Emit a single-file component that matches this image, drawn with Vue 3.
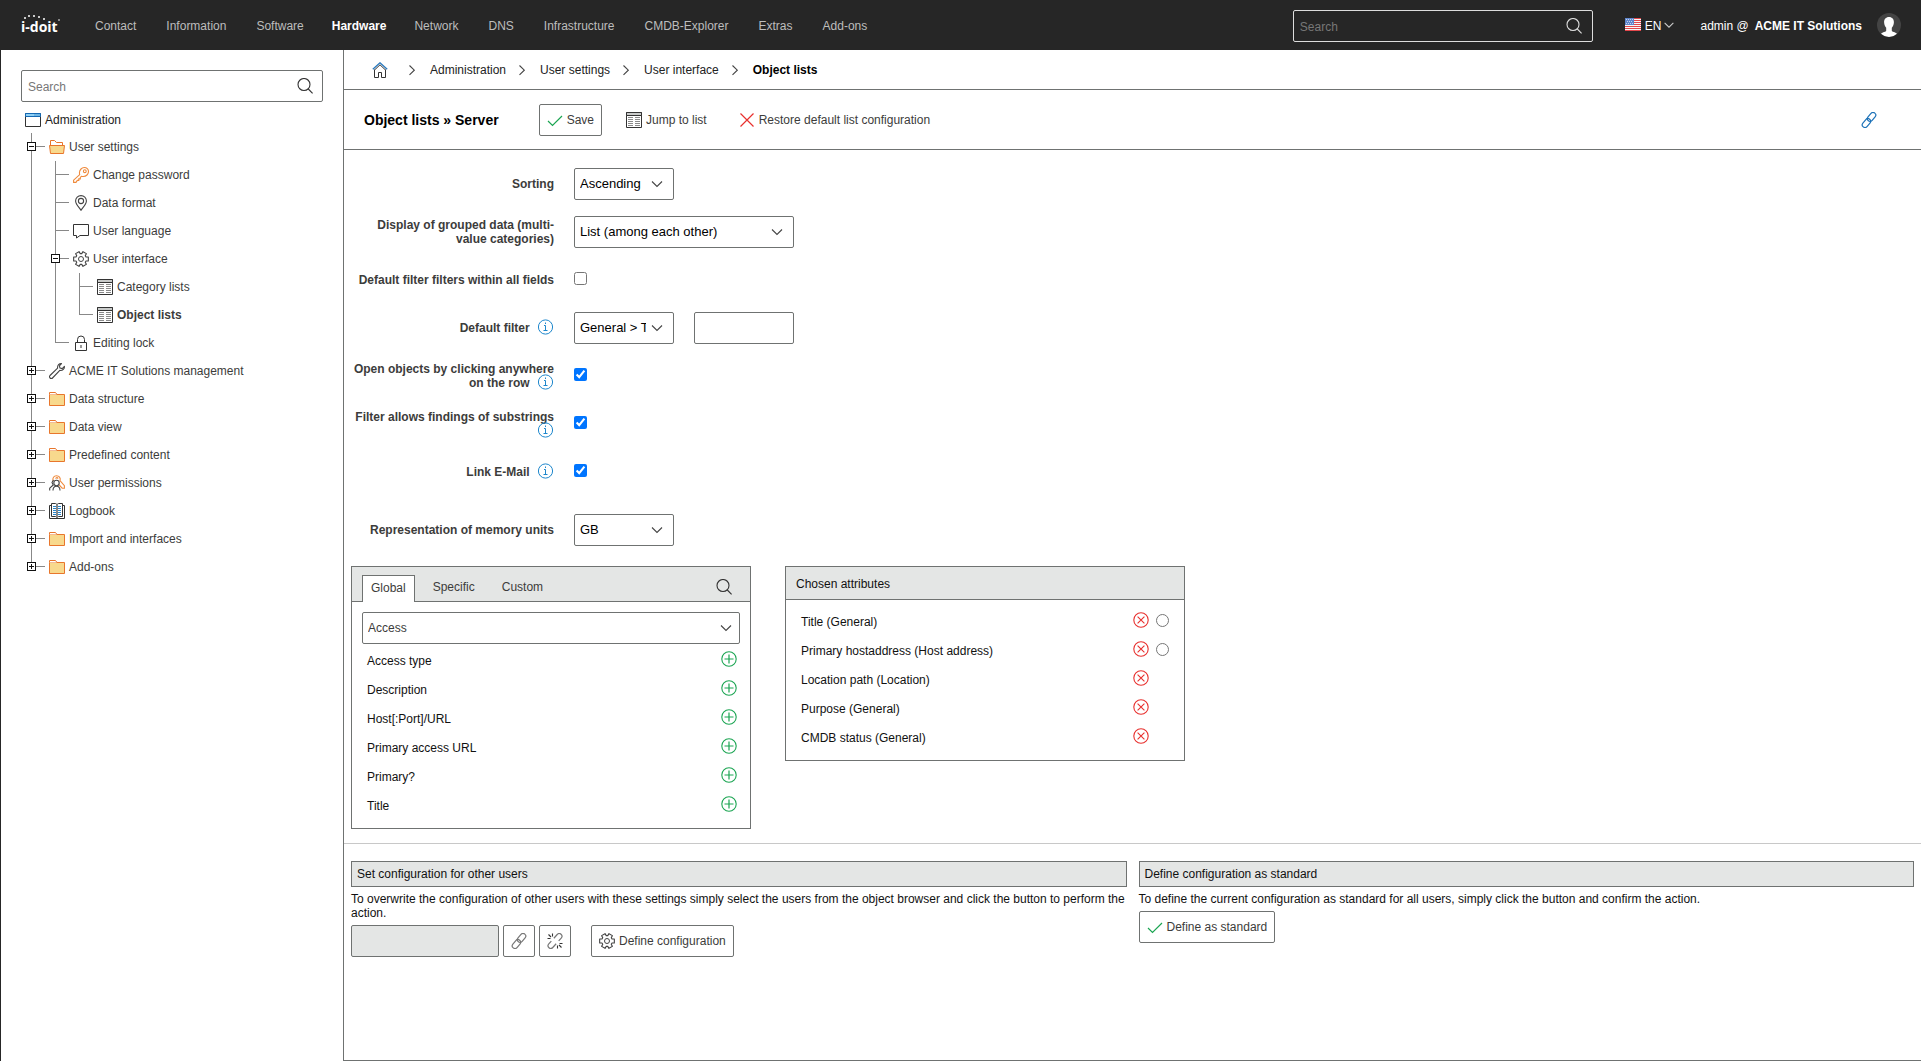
<script setup>
import { h, ref } from 'vue'

const S = 'fill="none" stroke="currentColor"'
const listIcon = `<path fill="#fff" stroke="#333" d="M.5.5h15v15H.5z"/><path fill="#c9cbca" stroke="#333" d="M.5.5h15v3H.5z"/><path stroke="#8a8a8a" fill="none" d="M2 5.5h5M2 7.5h5M2 9.5h5M2 11.5h5M2 13.5h5M9 5.5h5M9 7.5h5M9 9.5h5M9 11.5h5M9 13.5h5"/>`

// Six-toothed gear outline around the centre of the 16px grid
const gearPoints = [0, 60, 120, 180, 240, 300]
  .flatMap((a) => [[a - 22, 5.4], [a - 15, 7.6], [a + 15, 7.6], [a + 22, 5.4]])
  .map(([deg, r]) => {
    const rad = (deg * Math.PI) / 180
    return `${(8 + r * Math.cos(rad)).toFixed(2)},${(8 + r * Math.sin(rad)).toFixed(2)}`
  })
  .join(' ')

const icons = {
  search: `<g ${S} stroke-width="1.100"><circle cx="7" cy="6.500" r="6"/><path d="m11.300 11 4.300 4.300"/></g>`,
  window: `<path fill="#fff" stroke="#333" d="M.5 1.500h15v13H.5z"/><path fill="#8fd0f5" stroke="#1468b3" d="M.5 1.500h15v3H.5z"/><path stroke="#1468b3" d="M9.500 3h1M11.500 3h1M13.500 3h1"/>`,
  folderOpen: `<path fill="#fff" stroke="#e8762c" d="M1.500 6.500v-5h4l2 2h6v3"/><path fill="#f8d98d" stroke="#e8762c" d="M.5 6.500h15l-1 8h-13z"/>`,
  folder: `<path fill="#f8d98d" stroke="#e8762c" d="M.5 3.500h15v11H.5z"/><path fill="#fff" stroke="#e8762c" d="M.5 3.500v-2h6l1.500 2"/>`,
  key: `<g fill="none" stroke="#ef8a3c" stroke-width="1.100"><path d="M6.700 7.600C6.200 5.700 6.500 3.500 8 2 9.800.300 12.600.1 14.300 1.700c1.700 1.700 1.500 4.500-.3 6.300-1.500 1.500-3.700 1.800-5.600 1.300L7.300 10.400v1.500H5.800v1.500H4.300L3 15.400H.6V13.200z"/><circle cx="11.800" cy="4.200" r="1.400"/></g>`,
  pin: `<g fill="none" stroke="#444" stroke-width="1.100"><path d="M8 15.300C6.500 12.500 2.600 9.500 2.600 6a5.400 5.400 0 0 1 10.800 0c0 3.500-3.900 6.500-5.400 9.300z"/><circle cx="8" cy="6" r="2.600"/></g>`,
  bubble: `<path fill="none" stroke="#333" d="M.5 1.500h15v11H7L3.500 15v-2.500h-3z"/>`,
  gear: `<g fill="none" stroke="#444" stroke-linejoin="round"><polygon stroke-width="1.100" points="${gearPoints}"/><circle cx="8" cy="8" r="2.500"/></g>`,
  list: listIcon,
  lock: `<path fill="none" stroke="#333" d="M4.500 7V4.500a3.500 3.500 0 0 1 7 0V7M2.500 7.500h11v8h-11z"/><path stroke="#999" stroke-width="2" d="M8 10v3"/>`,
  wrench: `<path fill="none" stroke="#444" stroke-width="1.100" stroke-linejoin="round" d="M12.500.6C10.200.4 8.200 2.200 8.600 5.200L1 12.500c-.7.8-.6 1.800.1 2.500s1.700.7 2.400 0l7.300-7.600c3 .4 4.900-1.700 4.600-4L13.200 5.600 11 5 10.400 2.800z"/>`,
  users: `<g fill="none"><path stroke="#ef8a3c" stroke-width="1.100" d="M4.200 6.200C3 3 5 .7 7.500.7s4.500 2 3.500 5l4.400 5v2.500h-2.200l-3-3.200M6.500 3.500l1.500-1 1.200 1"/><g stroke="#444" stroke-width="1.100"><circle cx="7.500" cy="8" r="2.700"/><path d="M.7 15.500v-2.300L4.200 10 3 7.500 4.500 5M4 15.500c0-2.600 1.200-4.300 3.500-4.300s3.500 1.700 3.500 4.300"/></g></g>`,
  book: `<path fill="none" stroke="#333" d="M2.500 2.500h-2v13h15v-13h-2M2.500.5h4l1.500 1 1.500-1h4v13h-4l-1.500 1-1.500-1h-4z"/><path stroke="#888" stroke-width="2" d="M8 1.500v13"/><path stroke="#2a86c9" d="M4 3.500h3M4 5.500h3M4 7.500h3M4 9.500h3M4 11.500h3M9 3.500h3M9 5.500h3M9 7.500h3M9 9.500h3M9 11.500h3"/>`,
  home: `<path fill="none" stroke="#333" d="M2.500 7.500v8h4v-5h3v5h4v-8M2.500 8 8 2.800 13.500 8"/><path fill="none" stroke="#2a79bd" stroke-width="1.300" d="m.8 7.300 7.200-6.500 7.200 6.500"/>`,
  right: `<path ${S} stroke-width="1.100" d="m5.500 3.500 4.800 4.700-4.800 4.700"/>`,
  down: `<path ${S} stroke-width="1.200" d="m3 5.500 5 5 5-5"/>`,
  check: `<path fill="none" stroke="#1ba552" stroke-width="1.200" d="m1 9 4.500 4.500L15 4"/>`,
  cross: `<path fill="none" stroke="#e8302e" stroke-width="1.200" d="M1.500 1.500l13 13M14.500 1.500l-13 13"/>`,
  link: `<g ${S} stroke-width="1.200" transform="rotate(-50 8 8)"><rect x="-1" y="5.300" width="10" height="5.400" rx="2.700"/><rect x="7" y="5.300" width="10" height="5.400" rx="2.700"/></g>`,
  unlink: `<path ${S} stroke-width="1.200" transform="rotate(-48 8 8)" d="M5.500 5.300H1.700a2.700 2.700 0 0 0 0 5.400h5M10.500 10.700h3.800a2.700 2.700 0 0 0 0-5.400h-5"/><path stroke="#333" stroke-width="1.100" d="M1.500 1.500 4 4M5.500.5v3M.5 5.500h3M14.500 14.500 12 12M10.500 15.500v-3M15.500 10.500h-3"/>`,
  info: `<g fill="none" stroke="#1e87cc"><circle cx="7.500" cy="8" r="7.100"/><path d="M6 6.500h1.500v5M5.500 11.500h4M7.500 3.500v1.500"/></g>`,
  add: `<g fill="none" stroke="#1ba552"><circle cx="8" cy="8" r="7.200" stroke-width="1.100"/><path d="M8 3.500v9M3.500 8h9" stroke-width="1.200"/></g>`,
  remove: `<g fill="none" stroke="#e8302e"><circle cx="8" cy="8" r="7.200" stroke-width="1.100"/><path stroke-width="1.100" d="m4.600 4.600 6.800 6.800M11.400 4.600l-6.800 6.800"/></g>`,
  flag: `<path fill="#f7f7f7" d="M0 1h16v13H0z"/><path stroke="#e2474b" d="M0 1.500h16M0 3.500h16M0 5.500h16M0 7.500h16M0 9.500h16M0 11.500h16M0 13.500h16"/><path fill="#5f86cc" d="M0 1h9v7H0z"/><path stroke="#c3d2ee" stroke-dasharray="1 1" d="M1 2.500h7M2 4.500h6M1 6.500h7"/>`
}

const Icon = (props) => h('svg', { viewBox: '0 0 16 16', width: 16, height: 16, 'aria-hidden': 'true', innerHTML: icons[props.name] })
Icon.props = ['name']

const nav = ['Contact', 'Information', 'Software', 'Hardware', 'Network', 'DNS', 'Infrastructure', 'CMDB-Explorer', 'Extras', 'Add-ons']
const crumbs = ['Administration', 'User settings', 'User interface', 'Object lists']

const tree = [
  {
    name: 'User settings', icon: 'folderOpen', open: true, children: [
      { name: 'Change password', icon: 'key' },
      { name: 'Data format', icon: 'pin' },
      { name: 'User language', icon: 'bubble' },
      {
        name: 'User interface', icon: 'gear', open: true, children: [
          { name: 'Category lists', icon: 'list' },
          { name: 'Object lists', icon: 'list', active: true }
        ]
      },
      { name: 'Editing lock', icon: 'lock' }
    ]
  },
  { name: 'ACME IT Solutions management', icon: 'wrench' },
  { name: 'Data structure', icon: 'folder' },
  { name: 'Data view', icon: 'folder' },
  { name: 'Predefined content', icon: 'folder' },
  { name: 'User permissions', icon: 'users' },
  { name: 'Logbook', icon: 'book' },
  { name: 'Import and interfaces', icon: 'folder' },
  { name: 'Add-ons', icon: 'folder' }
]

const tabs = ['Global', 'Specific', 'Custom']
const activeTab = ref('Global')
const attributes = ['Access type', 'Description', 'Host[:Port]/URL', 'Primary access URL', 'Primary?', 'Title']
const chosen = [
  { name: 'Title (General)', sortable: true },
  { name: 'Primary hostaddress (Host address)', sortable: true },
  { name: 'Location path (Location)' },
  { name: 'Purpose (General)' },
  { name: 'CMDB status (General)' }
]
</script>

<template>
  <div class="app">
    <header class="top">
      <a class="logo" href="#" aria-label="i-doit">
        <svg width="42" height="22" viewBox="0 0 42 22">
          <text x="0" y="18" font-family="Open Sans, sans-serif" font-weight="700" font-size="14" fill="#fff">i-doit</text>
          <g fill="#fff">
            <circle cx="4" cy="4" r="1" /><circle cx="8" cy="2" r="1" /><circle cx="13" cy="2" r="1" />
            <circle cx="18" cy="3" r="1" /><circle cx="23" cy="5" r="1" /><circle cx="38" cy="6" r="1" opacity=".6" />
          </g>
        </svg>
      </a>
      <nav class="nav">
        <a v-for="item in nav" :key="item" href="#" :class="{ active: item === 'Hardware' }">{{ item }}</a>
      </nav>
      <div class="search dark">
        <input type="text" placeholder="Search" aria-label="Search">
        <Icon name="search" />
      </div>
      <button class="lang" type="button"><Icon name="flag" /><span>EN</span><Icon class="caret" name="down" /></button>
      <a class="account" href="#"><span>admin @</span><b>ACME IT Solutions</b>
        <svg width="24" height="24" viewBox="0 0 24 24" aria-hidden="true">
          <circle cx="12" cy="12" r="12" fill="#444" />
          <path fill="#fff" d="M12 4c3.200 0 5 2.300 4.900 5.200-.1 2.700-1 4.200-2.100 5.500v3.100c0 1 3.600 1.200 5.200 3A12 12 0 0 1 12 24a12 12 0 0 1-8-3.200c1.600-1.800 5.200-2 5.200-3v-3.100C8.100 13.400 7.200 11.900 7.100 9.200 7 6.300 8.800 4 12 4z" />
        </svg>
      </a>
    </header>

    <div class="body">
      <aside class="side">
        <div class="search">
          <input type="text" placeholder="Search" aria-label="Search tree">
          <Icon name="search" />
        </div>
        <a class="root" href="#"><Icon name="window" />Administration</a>
        <ul class="tree">
          <li v-for="a in tree" :key="a.name">
            <div class="row">
              <button class="toggle" :class="{ open: a.open }" type="button" :aria-label="'Toggle ' + a.name"></button>
              <a href="#"><Icon :name="a.icon" />{{ a.name }}</a>
            </div>
            <ul v-if="a.children">
              <li v-for="b in a.children" :key="b.name">
                <div class="row">
                  <button v-if="b.children" class="toggle open" type="button" :aria-label="'Toggle ' + b.name"></button>
                  <a href="#"><Icon :name="b.icon" />{{ b.name }}</a>
                </div>
                <ul v-if="b.children">
                  <li v-for="c in b.children" :key="c.name">
                    <div class="row"><a href="#" :class="{ active: c.active }"><Icon :name="c.icon" />{{ c.name }}</a></div>
                  </li>
                </ul>
              </li>
            </ul>
          </li>
        </ul>
      </aside>

      <main class="main">
        <nav class="crumbs" aria-label="Breadcrumb">
          <a class="home" href="#" aria-label="Home"><Icon name="home" /></a>
          <template v-for="c in crumbs" :key="c">
            <Icon class="sep" name="right" />
            <a href="#">{{ c }}</a>
          </template>
        </nav>

        <div class="toolbar">
          <h1>Object lists » Server</h1>
          <div class="actions">
            <button class="btn" type="button"><Icon name="check" />Save</button>
            <button class="btn plain" type="button"><Icon name="list" />Jump to list</button>
            <button class="btn plain" type="button"><Icon name="cross" />Restore default list configuration</button>
          </div>
          <button class="btn plain permalink" type="button" aria-label="Link"><Icon name="link" /></button>
        </div>

        <form class="form" @submit.prevent>
          <div class="field">
            <label for="sorting">Sorting</label>
            <select id="sorting" class="short"><option>Ascending</option></select>
          </div>
          <div class="field">
            <label for="grouped">Display of grouped data (multi-value categories)</label>
            <select id="grouped" class="long"><option>List (among each other)</option></select>
          </div>
          <div class="field">
            <label for="all-fields">Default filter filters within all fields</label>
            <input id="all-fields" type="checkbox">
          </div>
          <div class="field">
            <label for="filter">Default filter <Icon class="info" name="info" /></label>
            <select id="filter" class="short"><option>General &gt; Title</option></select>
            <input class="text" type="text" aria-label="Default filter value">
          </div>
          <div class="field">
            <label for="row-click">Open objects by clicking anywhere on the row <Icon class="info" name="info" /></label>
            <input id="row-click" type="checkbox" checked>
          </div>
          <div class="field">
            <label for="substrings">Filter allows findings of substrings <Icon class="info" name="info" /></label>
            <input id="substrings" type="checkbox" checked>
          </div>
          <div class="field">
            <label for="mail">Link E-Mail <Icon class="info" name="info" /></label>
            <input id="mail" type="checkbox" checked>
          </div>
          <div class="field memory">
            <label for="memory">Representation of memory units</label>
            <select id="memory" class="short"><option>GB</option></select>
          </div>
        </form>

        <div class="panels">
          <section class="panel">
            <div class="tabs">
              <button v-for="t in tabs" :key="t" type="button" :class="{ current: t === activeTab }" @click="activeTab = t">{{ t }}</button>
              <button class="find" type="button" aria-label="Search attributes"><Icon name="search" /></button>
            </div>
            <div class="available">
              <select class="category" aria-label="Category"><option>Access</option></select>
              <ul>
                <li v-for="a in attributes" :key="a">
                  <span>{{ a }}</span>
                  <button type="button" :aria-label="'Add ' + a"><Icon name="add" /></button>
                </li>
              </ul>
            </div>
          </section>
          <section class="panel">
            <h2>Chosen attributes</h2>
            <ul class="chosen">
              <li v-for="c in chosen" :key="c.name">
                <span>{{ c.name }}</span>
                <button type="button" :aria-label="'Remove ' + c.name"><Icon name="remove" /></button>
                <div class="slot"><input v-if="c.sortable" type="radio" name="default-sort" :aria-label="'Sort by ' + c.name"></div>
              </li>
            </ul>
          </section>
        </div>

        <hr>

        <div class="config">
          <section>
            <h2>Set configuration for other users</h2>
            <p>To overwrite the configuration of other users with these settings simply select the users from the object browser and click the button to perform the action.</p>
            <div class="controls">
              <input class="users" type="text" readonly aria-label="Users">
              <button class="btn square" type="button" aria-label="Select users"><Icon name="link" /></button>
              <button class="btn square" type="button" aria-label="Detach users"><Icon name="unlink" /></button>
              <button class="btn define" type="button"><Icon name="gear" />Define configuration</button>
            </div>
          </section>
          <section>
            <h2>Define configuration as standard</h2>
            <p>To define the current configuration as standard for all users, simply click the button and confirm the action.</p>
            <div class="controls">
              <button class="btn" type="button"><Icon name="check" />Define as standard</button>
            </div>
          </section>
        </div>
      </main>
    </div>
  </div>
</template>

<style>
body { margin: 0; background: #fff; }
</style>

<style scoped>
.app {
  display: flex;
  flex-direction: column;
  min-height: 100vh;
  box-sizing: border-box;
  border-left: 1px solid #262626;
  font-family: "Liberation Sans", Arial, sans-serif;
  font-size: 12px;
  line-height: 14px;
  color: #111;
}
.app * { box-sizing: border-box; }
a { color: inherit; text-decoration: none; }
ul { list-style: none; margin: 0; padding: 0; }
svg { flex: none; display: block; }
button, input, select { font: inherit; color: inherit; margin: 0; }
button { padding: 0; border: 0; background: none; cursor: pointer; }

.top { display: flex; align-items: center; height: 50px; padding: 0 20px; background: #262626; color: #fff; }
.logo { width: 42px; }
.nav { display: flex; flex: 1; gap: 30px; margin-left: 32px; padding-top: 2px; color: #bdbdbd; white-space: nowrap; }
.nav .active { margin: 0 -2px; color: #fff; font-weight: 700; }
.lang { display: flex; align-items: center; margin-left: 32px; }
.lang span { margin: 0 1px 0 4px; padding-top: 2px; }
.lang .caret { width: 14px; height: 14px; color: #ccc; }
.account { display: flex; align-items: center; margin-left: 24px; white-space: nowrap; }
.account span { padding-top: 2px; }
.account b { margin: 0 15px 0 6px; padding-top: 2px; }

.search { display: flex; align-items: center; height: 32px; padding-right: 9px; border: 1px solid #6f7271; border-radius: 2px; color: #333; }
.search input { flex: 1; min-width: 0; padding: 2px 6px 0; border: 0; outline: 0; background: none; }
.search input::placeholder { color: #777; }
.search.dark { width: 300px; margin-top: 2px; padding-right: 10px; border-color: #ddd; color: #ddd; }

.body { display: flex; flex: 1; }
.side { width: 343px; flex: none; padding: 20px; border-right: 1px solid #6f7271; color: #3c3c3b; }
.root { display: flex; align-items: center; gap: 4px; height: 26px; margin: 5px 0 0 4px; color: #222; }
.tree { margin-left: 6px; }
.tree ul { margin-left: 24px; }
.tree li { background: linear-gradient(#888, #888) 4px 0 / 1px 100% no-repeat; }
.tree li:last-child { background-size: 1px 14px; }
.row { display: flex; align-items: center; height: 28px; padding-left: 22px; background: linear-gradient(#888, #888) 4px 13px / 14px 1px no-repeat; }
.row a { display: flex; align-items: center; gap: 4px; white-space: nowrap; }
.row a.active { font-weight: 700; }
.toggle {
  width: 9px;
  height: 9px;
  margin: 0 13px 1px -22px;
  border: 1px solid #111;
  background: linear-gradient(#111, #111) center / 5px 1px no-repeat, linear-gradient(#111, #111) center / 1px 5px no-repeat, #fff;
}
.toggle.open { background: linear-gradient(#111, #111) center / 5px 1px no-repeat, #fff; }

.main { flex: 1; min-width: 0; border-bottom: 1px solid #6f7271; }
.crumbs { display: flex; align-items: center; height: 40px; padding-left: 28px; border-bottom: 1px solid #6f7271; color: #222; }
.crumbs .home { margin-right: 8px; }
.crumbs .sep { margin: 0 10px 0 8px; color: #444; }
.crumbs a:last-child { font-weight: 700; color: #000; }

.toolbar { display: flex; align-items: center; height: 60px; padding: 0 36px 0 20px; border-bottom: 1px solid #6f7271; }
h1 { margin: 0 40px 0 0; font-size: 14px; line-height: 16px; color: #000; }
.actions { display: flex; flex: 1; gap: 16px; }
.btn { display: inline-flex; align-items: center; gap: 4px; height: 32px; padding: 0 7px; border: 1px solid #6f7271; border-radius: 2px; background: #fff; color: #3c3c3b; white-space: nowrap; }
.btn.plain { border-color: transparent; }
.btn.permalink { color: #1d72b8; }

.form { padding: 10px 7px 0; }
.field { display: flex; align-items: center; min-height: 48px; }
.memory { margin-top: 10px; }
.field label { width: 203px; margin-right: 20px; text-align: right; font-weight: 700; color: #3c3c3b; }
.info { display: inline-block; vertical-align: -3px; margin: -2px 0 0 5px; }
select {
  height: 32px;
  padding: 0 27px 0 5px;
  border: 1px solid #6f7271;
  border-radius: 2px;
  appearance: none;
  background: #fff url("data:image/svg+xml,%3Csvg xmlns='http://www.w3.org/2000/svg' width='12' height='8'%3E%3Cpath d='M1 1.500l5 5 5-5' fill='none' stroke='%23444' stroke-width='1.100'/%3E%3C/svg%3E") right 10px center no-repeat;
}
.field select { font-size: 13px; color: #000; }
.short, .text { width: 100px; }
.long { width: 220px; }
.text { height: 32px; margin-left: 20px; border: 1px solid #6f7271; border-radius: 2px; }
.field input[type="checkbox"] { width: 13px; height: 13px; margin-bottom: 3px; }

.panels { display: flex; align-items: flex-start; gap: 34px; margin: 12px 7px 14px; }
.panel { width: 400px; border: 1px solid #6f7271; }
.tabs { display: flex; align-items: flex-end; gap: 9px; height: 35px; padding: 0 10px; border-bottom: 1px solid #6f7271; background: #e4e6e5; color: #3c3c3b; }
.tabs button { height: 27px; padding: 0 8px 4px; border: 1px solid transparent; border-bottom: 0; margin-bottom: -1px; }
.tabs .current { padding-bottom: 2px; background: #fff; border-color: #6f7271; }
.tabs .find { margin: 0 0 6px auto; height: 16px; padding: 0 8px 0 0; border: 0; color: #333; }
.available { padding: 10px 10px 8px; }
.category { width: 100%; margin-bottom: 2px; color: #3c3c3b; background-position: right 7px center; }
.panel li { display: flex; align-items: center; height: 29px; }
.panel li span { flex: 1; }
.available li { padding: 0 3px 0 5px; }
.panel h2 { margin: 0; padding: 0 10px; height: 33px; line-height: 34px; font-size: 12px; font-weight: 400; border-bottom: 1px solid #6f7271; background: #e4e6e5; }
.chosen { padding: 7px 15px 8px; }
.slot { width: 13px; height: 15px; margin-left: 7px; }
.slot input { display: block; width: 13px; height: 13px; }
.panel li button { margin-bottom: 3px; }

hr { height: 1px; margin: 0; border: 0; background: #c8c8c8; }
.config { display: grid; grid-template-columns: 1fr 1fr; gap: 12px; padding: 17px 7px; }
.config h2 { margin: 0; padding: 0 5px; height: 26px; line-height: 24px; font-size: 12px; font-weight: 400; border: 1px solid #6f7271; background: #e4e6e5; }
.config p { margin: 5px 0; }
.controls { display: flex; gap: 4px; }
.users { width: 148px; height: 32px; border: 1px solid #6f7271; border-radius: 2px; background: #e4e6e5; }
.btn.square { color: #777; }
.define { margin-left: 16px; }
</style>
